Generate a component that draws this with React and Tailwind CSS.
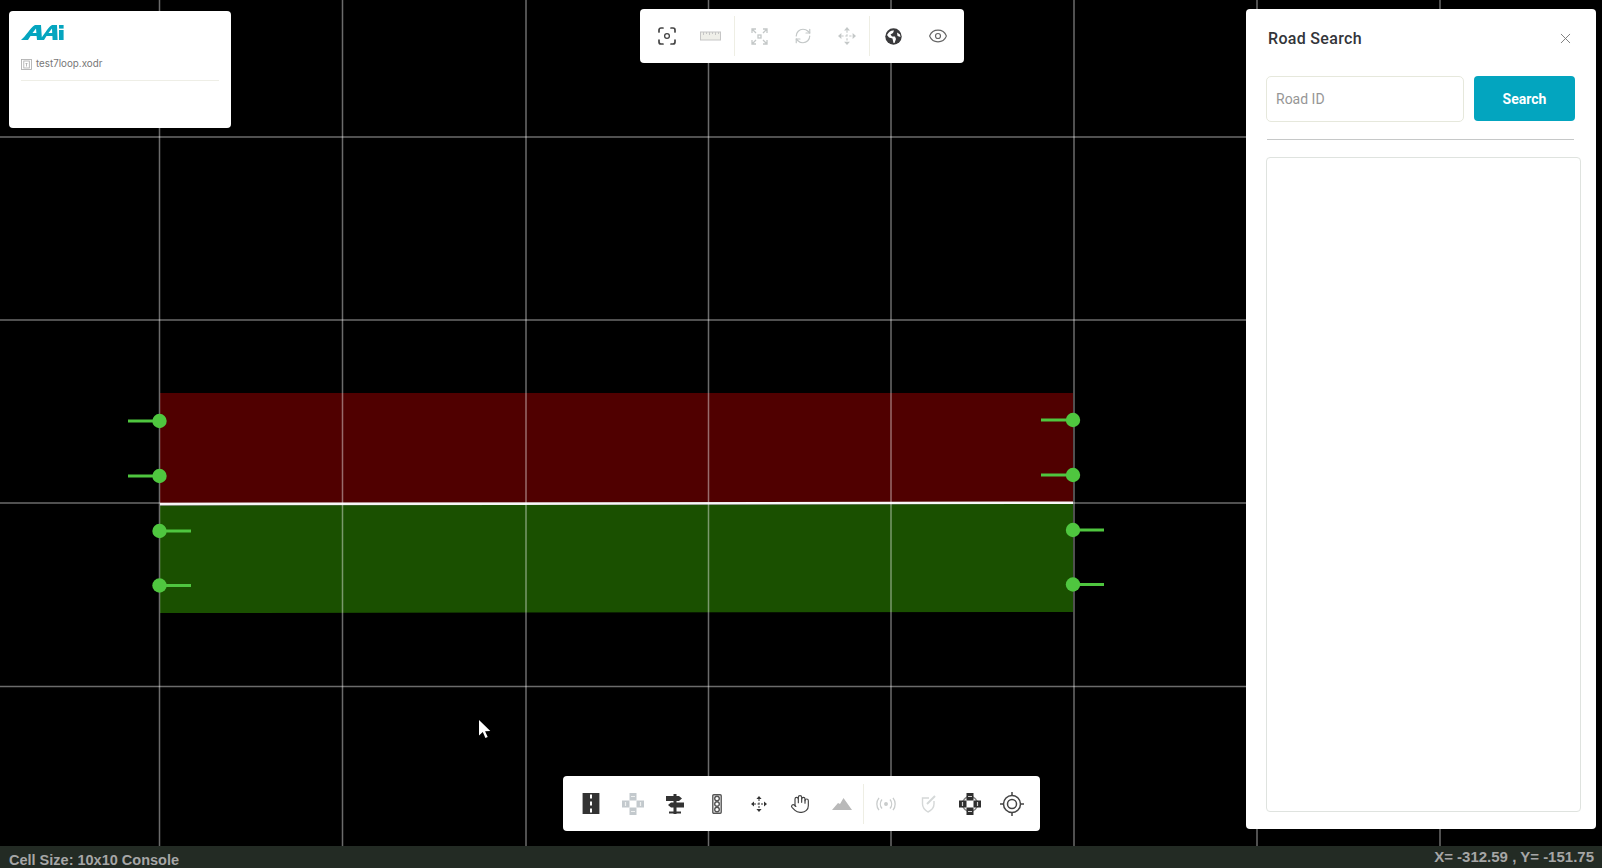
import { Eye, Hand, X, RefreshCw } from 'lucide-react';

const gridX = [159.5, 342.5, 526, 708.5, 891, 1074, 1257, 1440];
const gridY = [137, 320, 503, 686.5];

const nodes = [
  { cx: 159.5, cy: 421, x1: 128, x2: 159 },
  { cx: 159.5, cy: 476, x1: 128, x2: 159 },
  { cx: 159.5, cy: 531, x1: 159, x2: 191 },
  { cx: 159.5, cy: 585.5, x1: 159, x2: 191 },
  { cx: 1073, cy: 420, x1: 1041, x2: 1073 },
  { cx: 1073, cy: 475, x1: 1041, x2: 1073 },
  { cx: 1073, cy: 530, x1: 1073, x2: 1104 },
  { cx: 1073, cy: 584.5, x1: 1073, x2: 1104 },
];

// the road scene on the canvas
function Scene() {
  return (
    <svg className="block w-full h-full" viewBox="0 0 1602 846">
      <polygon points="160,393 1073,393 1073,502 160,503.5" fill="#500000" />
      <polygon points="160,505.5 1073,504 1073,612 160,613" fill="#1a5000" />
      <polygon points="160,503 1073,501.5 1073,504 160,505.5" fill="#f4f4f4" />
      {gridX.map((x) => (
        <line key={x} x1={x} y1="0" x2={x} y2="846" stroke="#fff" strokeOpacity="0.42" strokeWidth="1.5" />
      ))}
      {gridY.map((y) => (
        <line key={y} x1="0" y1={y} x2="1246" y2={y} stroke="#fff" strokeOpacity="0.42" strokeWidth="1.5" />
      ))}
      {nodes.map((n) => (
        <g key={n.cy}>
          <line x1={n.x1} y1={n.cy} x2={n.x2} y2={n.cy} stroke="#4fc63f" strokeWidth="3" />
          <circle cx={n.cx} cy={n.cy} r="7.2" fill="#4fc63f" />
        </g>
      ))}
      <path d="M479 720v15.500l3.800-3.400 2.600 5.800 2.300-1-2.600-5.700 5.200-.3z" fill="#fff" />
    </svg>
  );
}

function AaiLogo() {
  return (
    <svg width="43" height="17" viewBox="0 0 43 17" fill="#05a5bf">
      <path d="M0 16 C5 12 9 4 14 1 L20 1 L21 16 L16 16 L15.6 12 L9.5 12 L7 16 Z M11.5 9 L15.4 9 L15 4.5 Z" fillRule="evenodd" />
      <path d="M18 16 C23 12 26 4 31 1 L36 1 L36.6 16 L31.6 16 L31.4 12 L25.5 12 L23 16 Z M27.5 9 L31.2 9 L31 4.5 Z" fillRule="evenodd" />
      <rect x="38" y="6" width="4.6" height="10" />
      <rect x="38" y="1" width="4.6" height="3.6" />
    </svg>
  );
}

function FileIcon() {
  return (
    <svg width="11" height="11" viewBox="0 0 11 11" fill="none" stroke="#a9a9a9" strokeWidth="0.8">
      <rect x="0.5" y="0.5" width="10" height="10" />
      <rect x="2.8" y="2" width="5.5" height="7" />
      <path d="M4.5 4.5h2M5.5 4.5v3" />
    </svg>
  );
}

function ScanDot() {
  return (
    <svg width="18" height="18" viewBox="0 0 18 18" fill="none" stroke="#444" strokeWidth="1.7" strokeLinecap="round">
      <path d="M1 5V3a2 2 0 0 1 2-2h2M13 1h2a2 2 0 0 1 2 2v2M17 13v2a2 2 0 0 1-2 2h-2M5 17H3a2 2 0 0 1-2-2v-2" />
      <circle cx="9" cy="9" r="2.400" strokeWidth="1.300" />
    </svg>
  );
}

function Ruler() {
  return (
    <svg width="21" height="10" viewBox="0 0 21 10" fill="none" stroke="#c6c6c6" strokeWidth="1">
      <rect x="0.5" y="1" width="20" height="8" fill="#efefe9" />
      <path d="M3.5 1v3M6.5 1v2M9.5 1v3M12.5 1v2M15.5 1v3M18.5 1v2" />
    </svg>
  );
}

function FitIcon() {
  return (
    <svg width="17" height="17" viewBox="0 0 17 17" fill="none" stroke="#c4c8c8" strokeWidth="1.3">
      <path d="M1 5V1h4M1 1l4 4M12 1h4v4M16 1l-4 4M1 12v4h4M1 16l4-4M16 12v4h-4M16 16l-4-4" />
      <rect x="7" y="7" width="3" height="3" />
    </svg>
  );
}

function Globe() {
  return (
    <svg width="17" height="17" viewBox="0 0 17 17">
      <circle cx="8.5" cy="8.5" r="8.2" fill="#3a3a3c" />
      <path d="M2 7 C4 3 7 2 9 2.5 L8 5 L5.5 6.5 L7 8.5 L10 8.5 L11 11 L9.5 15 L8.5 15 L7.5 10.5 L4 9.5 Z M12 4.5 L15 6.5 L15.5 9 L12.5 8 Z" fill="#fff" />
    </svg>
  );
}

function RoadIcon() {
  return (
    <svg width="18" height="21" viewBox="0 0 18 21">
      <rect width="18" height="21" fill="#333" />
      <path d="M9 1.5v4M9 8.5v4M9 15.5v4" stroke="#fff" strokeWidth="2" />
      <path d="M.5 0v21M17.5 0v21" stroke="#aaa" strokeWidth="1" />
    </svg>
  );
}

function JunctionIcon({ dark }) {
  const arm = dark ? '#2f2f2f' : '#c3c9cd';
  const line = dark ? '#cfcfcf' : '#eef0f0';
  return (
    <svg width="22" height="22" viewBox="0 0 22 22">
      {dark && <circle cx="11" cy="11" r="7.5" fill="none" stroke="#888" strokeWidth="1.6" />}
      <rect x="7.5" y="0" width="7" height="7.500" fill={arm} />
      <rect x="7.5" y="14.500" width="7" height="7.500" fill={arm} />
      <rect x="0" y="7.5" width="7.500" height="7" fill={arm} />
      <rect x="14.500" y="7.5" width="7.500" height="7" fill={arm} />
      <path d="M9 3.500h4M9 18.500h4M3.500 9v4M18.500 9v4" stroke={line} strokeWidth="1.200" />
    </svg>
  );
}

function SignIcon() {
  return (
    <svg width="20" height="20" viewBox="0 0 20 20" fill="#333">
      <rect x="8.5" y="0" width="3" height="20" />
      <path d="M1 2h13l3 2.5L14 7H1z" />
      <path d="M19 8.5H6l-3 2.5 3 2.5h13z" />
      <rect x="4" y="17.5" width="12" height="2" />
    </svg>
  );
}

function LightIcon() {
  return (
    <svg width="10" height="20" viewBox="0 0 10 20" fill="none" stroke="#555" strokeWidth="1.4">
      <rect x="0.8" y="0.8" width="8.4" height="18.4" rx="1" />
      <circle cx="5" cy="4.5" r="2.300" />
      <circle cx="5" cy="10" r="2.300" />
      <circle cx="5" cy="15.5" r="2.300" />
    </svg>
  );
}

function ArrowsIcon({ color = '#333', size = 16 }) {
  return (
    <svg width={size} height={size} viewBox="0 0 16 16" fill={color}>
      <path d="M8 0l2.6 3H5.4zM8 16l-2.6-3h5.2zM0 8l3-2.6v5.2zM16 8l-3 2.6V5.4z" />
      <path d="M8 3v10M3 8h10" stroke={color} strokeWidth="1" strokeDasharray="2 1.5" />
    </svg>
  );
}

function Mountain() {
  return (
    <svg width="20" height="12" viewBox="0 0 20 12" fill="#b9b9b9">
      <path d="M0 12 L6 5 L8 6 L11.5 0 L20 12 Z" />
    </svg>
  );
}

function SignalIcon() {
  return (
    <svg width="20" height="14" viewBox="0 0 20 14" fill="none" stroke="#c9cccc" strokeWidth="1.3">
      <circle cx="10" cy="7" r="1.3" fill="#c9cccc" />
      <path d="M6 2.5a7 7 0 0 0 0 9M14 2.5a7 7 0 0 1 0 9M3 .8a10 10 0 0 0 0 12.4M17 .8a10 10 0 0 1 0 12.4" />
    </svg>
  );
}

function TagIcon() {
  return (
    <svg width="16" height="18" viewBox="0 0 16 18" fill="none" stroke="#d5d8d8" strokeWidth="1.4">
      <path d="M8 3H1.5v6c0 4 3 6.5 5.5 8 3-1.500 6-4 6-8V6" />
      <path d="M6 9l8-8" strokeWidth="2" />
    </svg>
  );
}

function TargetIcon() {
  return (
    <svg width="24" height="24" viewBox="0 0 24 24" fill="none" stroke="#444" strokeWidth="1.5">
      <circle cx="12" cy="12" r="8.5" />
      <circle cx="12" cy="12" r="4.5" />
      <path d="M12 0v4M12 20v4M0 12h4M20 12h4" />
    </svg>
  );
}

const Sep = () => <div className="w-px h-10 bg-[#eeeee4]" />;

function Slot({ className, children }) {
  return <div className={`flex items-center justify-center ${className}`}>{children}</div>;
}

function TopToolbar() {
  return (
    <div className="absolute left-[640px] top-[9px] w-[324px] h-[54px] bg-white rounded flex items-center pl-[4px]">
      <Slot className="w-[45px]"><ScanDot /></Slot>
      <Slot className="w-[42px]"><Ruler /></Slot>
      <Slot className="w-[3px] ml-[2px]"><Sep /></Slot>
      <Slot className="w-[44px] ml-px"><FitIcon /></Slot>
      <Slot className="w-[44px]"><RefreshCw size={18} color="#c4c8c8" strokeWidth={1.6} /></Slot>
      <Slot className="w-[43px]"><ArrowsIcon color="#c4c8c8" size={18} /></Slot>
      <Slot className="w-[3px]"><Sep /></Slot>
      <Slot className="w-[45px]"><Globe /></Slot>
      <Slot className="w-[43px]"><Eye size={20} color="#666" strokeWidth={1.4} /></Slot>
    </div>
  );
}

function BottomToolbar() {
  return (
    <div className="absolute left-[563px] top-[776px] w-[477px] h-[55px] bg-white rounded flex items-center pl-[7px]">
      <Slot className="w-[42px]"><RoadIcon /></Slot>
      <Slot className="w-[42px]"><JunctionIcon /></Slot>
      <Slot className="w-[42px]"><SignIcon /></Slot>
      <Slot className="w-[42px]"><LightIcon /></Slot>
      <Slot className="w-[42px]"><ArrowsIcon /></Slot>
      <Slot className="w-[40px]"><Hand size={20} color="#444" strokeWidth={1.4} /></Slot>
      <Slot className="w-[43px]"><Mountain /></Slot>
      <Slot className="w-px"><Sep /></Slot>
      <Slot className="w-[44px]"><SignalIcon /></Slot>
      <Slot className="w-[41px]"><TagIcon /></Slot>
      <Slot className="w-[42px]"><JunctionIcon dark /></Slot>
      <Slot className="w-[42px]"><TargetIcon /></Slot>
    </div>
  );
}

function FilePanel() {
  return (
    <div className="absolute left-[9px] top-[11px] w-[222px] h-[117px] bg-white rounded px-[12px] pt-[13px]">
      <AaiLogo />
      <div className="flex items-center gap-[4px] mt-[16px] pb-[9px] border-b border-[#eeeee6]">
        <FileIcon />
        <span className="text-[9.8px] leading-[14px] text-[#777] font-['Inter',sans-serif]">test7loop.xodr</span>
      </div>
    </div>
  );
}

function SearchPanel() {
  return (
    <div className="absolute left-[1246px] top-[9px] w-[350px] h-[820px] bg-white rounded pl-[20px] pr-[15px] flex flex-col font-['Roboto',sans-serif]">
      <div className="flex items-center justify-between h-[59px] pl-[2px] pr-[7px]">
        <span className="text-[16px] font-medium tracking-[0.02em] text-[#33353a]">Road Search</span>
        <X size={17} color="#777" strokeWidth={1.3} />
      </div>
      <div className="flex gap-[10px] mt-[8px] pr-[6px]">
        <input
          placeholder="Road ID"
          className="w-[198px] h-[46px] border border-[#e6e8dc] rounded-[5px] px-[9px] text-[14px] outline-none placeholder:text-[#969696]"
        />
        <button className="w-[101px] h-[45px] pt-px bg-[#03a5bf] rounded text-white text-[14px] font-bold">Search</button>
      </div>
      <div className="h-px bg-[#c6c8c8] mt-[17px] mr-[7px] ml-px" />
      <div className="flex-1 mt-[17px] mb-[17px] border border-[#dfe3df] rounded" />
    </div>
  );
}

export default function App() {
  return (
    <div className="w-[1602px] h-[868px] bg-black flex flex-col overflow-hidden">
      <div className="relative flex-1 min-h-0">
        <Scene />
        <FilePanel />
        <TopToolbar />
        <BottomToolbar />
        <SearchPanel />
      </div>
      <div className="h-[22px] bg-[#232b24] flex items-center justify-between pl-[9px] pr-[8px] text-[15px] font-bold text-[#a6a6a6] font-['Liberation_Sans',sans-serif]">
        <span className="self-end leading-[16px] text-[14.5px]">Cell Size: 10x10 Console</span>
        <span className="pt-px">X= -312.59 , Y= -151.75</span>
      </div>
    </div>
  );
}
